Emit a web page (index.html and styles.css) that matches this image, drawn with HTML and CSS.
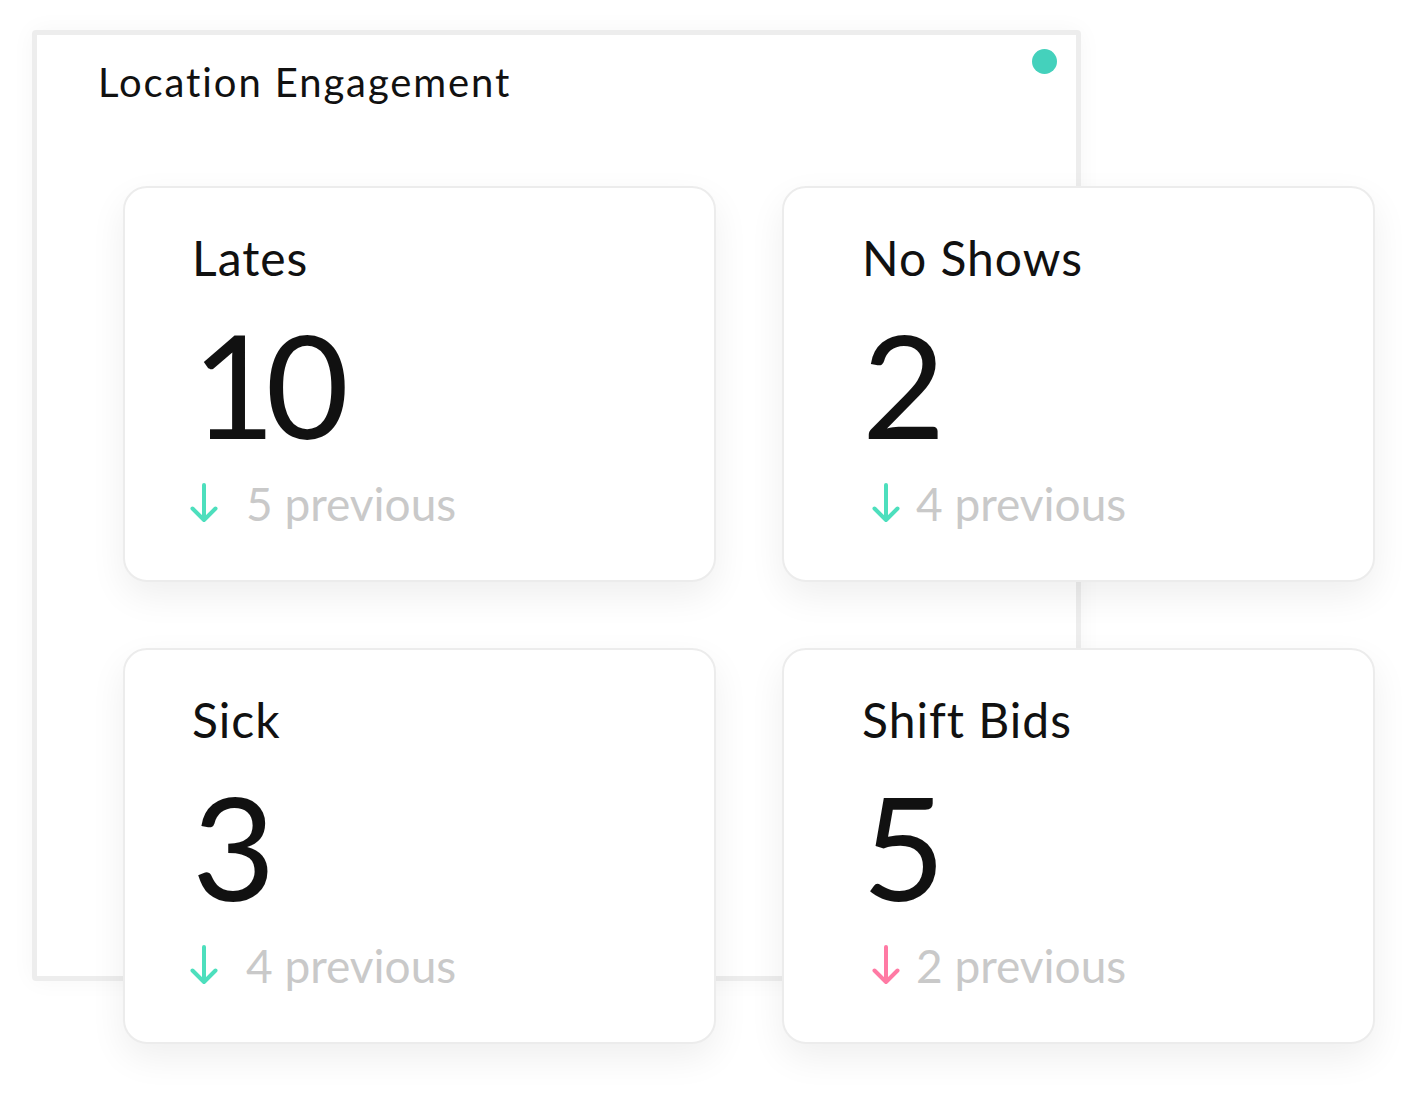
FILE: index.html
```html
<!DOCTYPE html>
<html lang="en">
<head>
    <meta charset="UTF-8">
    <meta name="viewport" content="width=device-width, initial-scale=1.0">
    <title>Location Engagement</title>
    <link rel="stylesheet" href="styles.css">
</head>
<body>

<div class="stage">
    <div class="panel">
        <div class="panel-head">
            <h2 class="panel-title">Location Engagement</h2>
            <span class="status-dot"></span>
        </div>

        <div class="stats">
            <div class="stat">
                <div class="stat-label">Lates</div>
                <div class="stat-value">10</div>
                <div class="stat-prev">
                    <span class="arrow arrow-good">
                        <svg width="28" height="40" viewBox="0 0 28 40"><path d="M14 2 V37 M2.5 25.5 L14 37 L25.5 25.5" fill="none" stroke="currentColor" stroke-width="4" stroke-linecap="round" stroke-linejoin="round"/></svg>
                    </span>
                    5 previous
                </div>
            </div>

            <div class="stat stat-right">
                <div class="stat-label">No Shows</div>
                <div class="stat-value">2</div>
                <div class="stat-prev">
                    <span class="arrow arrow-good">
                        <svg width="28" height="40" viewBox="0 0 28 40"><path d="M14 2 V37 M2.5 25.5 L14 37 L25.5 25.5" fill="none" stroke="currentColor" stroke-width="4" stroke-linecap="round" stroke-linejoin="round"/></svg>
                    </span>
                    4 previous
                </div>
            </div>

            <div class="stat">
                <div class="stat-label">Sick</div>
                <div class="stat-value">3</div>
                <div class="stat-prev">
                    <span class="arrow arrow-good">
                        <svg width="28" height="40" viewBox="0 0 28 40"><path d="M14 2 V37 M2.5 25.5 L14 37 L25.5 25.5" fill="none" stroke="currentColor" stroke-width="4" stroke-linecap="round" stroke-linejoin="round"/></svg>
                    </span>
                    4 previous
                </div>
            </div>

            <div class="stat stat-right">
                <div class="stat-label">Shift Bids</div>
                <div class="stat-value">5</div>
                <div class="stat-prev">
                    <span class="arrow arrow-bad">
                        <svg width="28" height="40" viewBox="0 0 28 40"><path d="M14 2 V37 M2.5 25.5 L14 37 L25.5 25.5" fill="none" stroke="currentColor" stroke-width="4" stroke-linecap="round" stroke-linejoin="round"/></svg>
                    </span>
                    2 previous
                </div>
            </div>
        </div>
    </div>
</div>

</body>
</html>
```

FILE: styles.css
```css
* {
    box-sizing: border-box;
}

html, body {
    margin: 0;
    min-height: 1112px;
}

body {
    font-family: Lato, 'Open Sans', sans-serif;
    color: #111;
    background: #fff;
}

.stage {
    min-height: 1112px;
    padding: 30px 0 0 32px;
}

.panel {
    width: 1049px;
    height: 951px;
    padding-top: 13px;
    border: 5px solid #ededed;
    border-radius: 4px;
    background: #fff;
    box-shadow: 0 0 24px rgba(0, 0, 0, 0.04);
}

.panel-head {
    display: flex;
    justify-content: space-between;
    align-items: flex-start;
    padding: 0 19px 0 61px;
}

.panel-title {
    margin: 10px 0 0;
    font-size: 40px;
    font-weight: 400;
    line-height: 1.2;
    letter-spacing: 1.9px;
}

.status-dot {
    width: 25px;
    height: 25px;
    margin-top: 1px;
    border-radius: 50%;
    background: #44d1bc;
}

.stats {
    display: grid;
    grid-template-columns: 593px 593px;
    grid-auto-rows: 396px;
    gap: 66px;
    width: 1252px;
    margin: 80px 0 0 86px;
}

.stat {
    padding: 41px 0 0 67px;
    border: 2px solid #ececec;
    border-radius: 24px;
    background: #fff;
    box-shadow: 0 14px 36px rgba(0, 0, 0, 0.065);
}

.stat-right {
    padding-left: 78px;
}

.stat-label {
    font-size: 48px;
    line-height: 1.2;
    letter-spacing: 1px;
}

.stat-value {
    margin-top: 25px;
    font-size: 144px;
    line-height: 1;
    letter-spacing: -10px;
}

.stat-prev {
    display: flex;
    align-items: center;
    margin-top: 20px;
    font-size: 46px;
    line-height: 1.2;
    color: #c9c9c9;
}

.arrow {
    display: flex;
    width: 56px;
    margin-left: -2px;
    margin-right: 0;
}

.stat-right .arrow {
    margin-left: 10px;
    width: 44px;
}

.arrow-good {
    color: #4ddfbd;
}

.arrow-bad {
    color: #ff7aa4;
}
```
